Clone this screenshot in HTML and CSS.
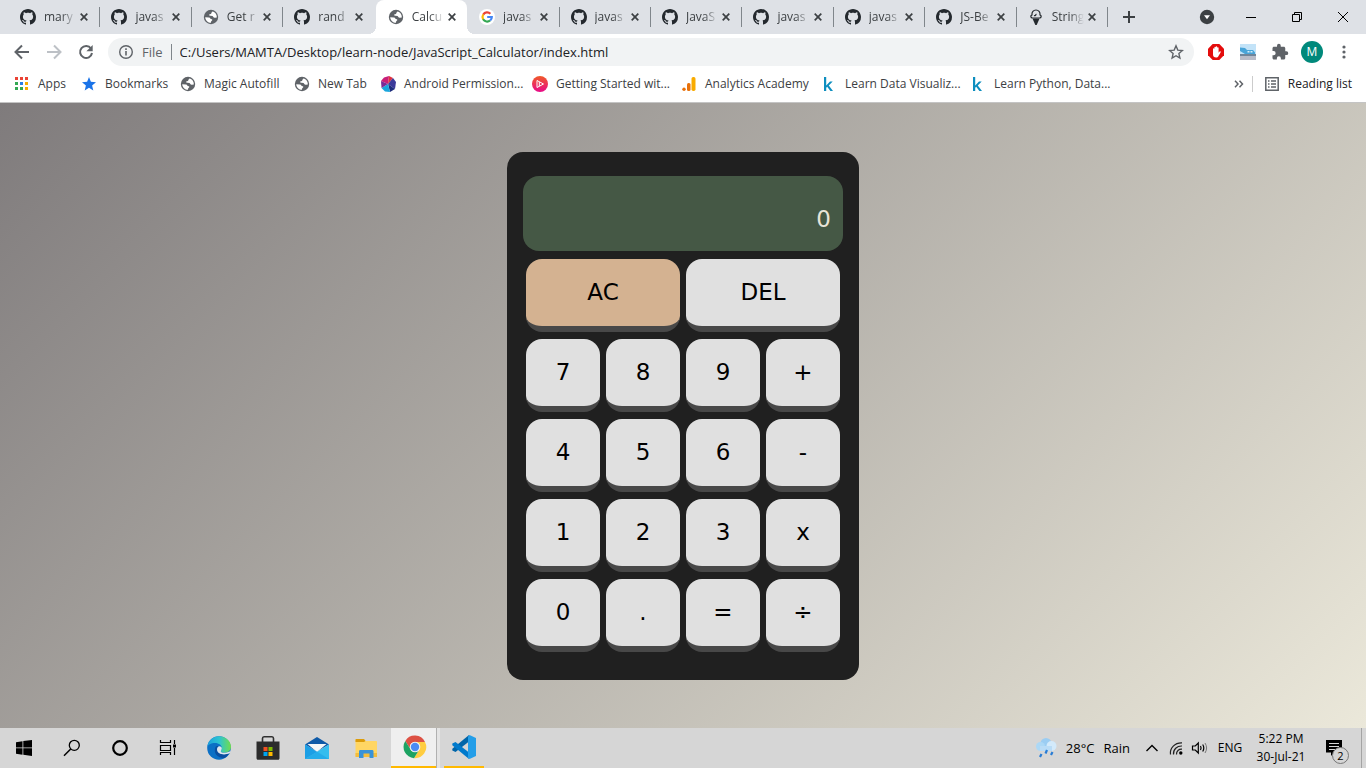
FILE: index.html
```
<!DOCTYPE html>
<html lang="en">
<head>
<meta charset="utf-8">
<title>Calculator</title>
<link rel="stylesheet" href="styles.css">
</head>
<body>
<svg class="defs" aria-hidden="true">
  <symbol id="github" viewBox="0 0 16 16"><path d="M8 0C3.58 0 0 3.58 0 8c0 3.54 2.29 6.53 5.47 7.59.4.07.55-.17.55-.38 0-.19-.01-.82-.01-1.49-2.01.37-2.53-.49-2.69-.94-.09-.23-.48-.94-.82-1.13-.28-.15-.68-.52-.01-.53.63-.01 1.08.58 1.23.82.72 1.21 1.87.87 2.33.66.07-.52.28-.87.51-1.07-1.78-.2-3.64-.89-3.64-3.95 0-.87.31-1.59.82-2.15-.08-.2-.36-1.02.08-2.12 0 0 .67-.21 2.2.82.64-.18 1.32-.27 2-.27s1.36.09 2 .27c1.53-1.04 2.2-.82 2.2-.82.44 1.1.16 1.92.08 2.12.51.56.82 1.27.82 2.15 0 3.07-1.87 3.75-3.65 3.95.29.25.54.73.54 1.48 0 1.07-.01 1.93-.01 2.2 0 .21.15.46.55.38A8.01 8.01 0 0 0 16 8c0-4.42-3.58-8-8-8z"/></symbol>
  <symbol id="globe" viewBox="0 0 16 16"><circle cx="8" cy="8" r="7.200"/><path d="M9.500 2.500C8 3.500 8.800 5 7 5.300 5.500 5.600 6 7 7.500 6.800L9.500 7c1 .3.5 2 2.500 1.800l1.800-.3C14 5.500 12 3 9.500 2.500zM2.200 8.200L6 8.500c1.500.3 1 1.500 2.800 1.700.7.300.7 1.300-.3 1.800-.7.500-.5 1.300-.5 1.800-3 0-5.500-2.300-5.800-5.600z" fill="#fff"/></symbol>
  <symbol id="x" viewBox="0 0 8 8"><path d="M.7.7l6.600 6.600M7.300.7L.7 7.300" fill="none" stroke="#3c4043" stroke-width="1.700"/></symbol>
  <symbol id="kaggle" viewBox="0 0 16 16"><path d="M3 1h2.200v8.500L9 5.500h2.700L7.800 9.400 12 15H9.400l-3.200-4.200-1 1V15H3z" fill="#0d8ebf"/></symbol>
</svg>

<header class="browser">
  <div class="tabstrip">
    <nav class="tabs" aria-label="Open tabs">
      <div class="tab"><svg class="fav"><use href="#github"/></svg><span class="title">mary</span><button class="close" aria-label="Close tab"><svg><use href="#x"/></svg></button></div>
      <div class="tab"><svg class="fav"><use href="#github"/></svg><span class="title">javas</span><button class="close" aria-label="Close tab"><svg><use href="#x"/></svg></button></div>
      <div class="tab"><svg class="fav globe"><use href="#globe"/></svg><span class="title">Get r</span><button class="close" aria-label="Close tab"><svg><use href="#x"/></svg></button></div>
      <div class="tab before"><svg class="fav"><use href="#github"/></svg><span class="title">rand</span><button class="close" aria-label="Close tab"><svg><use href="#x"/></svg></button></div>
      <div class="tab active"><svg class="fav globe"><use href="#globe"/></svg><span class="title">Calcu</span><button class="close" aria-label="Close tab"><svg><use href="#x"/></svg></button></div>
      <div class="tab"><svg class="fav" viewBox="0 0 16 16"><circle cx="8" cy="8" r="8" fill="#fff"/><g fill="none" stroke-width="2.200"><path d="M4.200 5.600a4.700 4.700 0 0 1 7.200-.9" stroke="#ea4335"/><path d="M4.200 5.500a5 5 0 0 0 0 5" stroke="#fbbc05"/><path d="M4.100 10.300a4.700 4.700 0 0 0 7 1.200" stroke="#34a853"/><path d="M8.200 8h4.600a4.700 4.700 0 0 1-1.600 3.500" stroke="#4285f4"/></g></svg><span class="title">javas</span><button class="close" aria-label="Close tab"><svg><use href="#x"/></svg></button></div>
      <div class="tab"><svg class="fav"><use href="#github"/></svg><span class="title">javas</span><button class="close" aria-label="Close tab"><svg><use href="#x"/></svg></button></div>
      <div class="tab"><svg class="fav"><use href="#github"/></svg><span class="title">JavaS</span><button class="close" aria-label="Close tab"><svg><use href="#x"/></svg></button></div>
      <div class="tab"><svg class="fav"><use href="#github"/></svg><span class="title">javas</span><button class="close" aria-label="Close tab"><svg><use href="#x"/></svg></button></div>
      <div class="tab"><svg class="fav"><use href="#github"/></svg><span class="title">javas</span><button class="close" aria-label="Close tab"><svg><use href="#x"/></svg></button></div>
      <div class="tab"><svg class="fav"><use href="#github"/></svg><span class="title">JS-Be</span><button class="close" aria-label="Close tab"><svg><use href="#x"/></svg></button></div>
      <div class="tab"><svg class="fav" viewBox="0 0 16 16"><path d="M4.500 9C2.500 9 2.200 6.500 4 5.900 3.600 3 5.500 1 8 1s4.400 2 4 4.900c1.800.6 1.500 3.100-.5 3.100zM6 6.500c1.200.5 2.200-.5 2-1.700" fill="none" stroke="#24292e" stroke-width="1.200"/><path d="M4.500 9.500h7L8.700 16H7.300z" fill="#24292e"/></svg><span class="title">String</span><button class="close" aria-label="Close tab"><svg><use href="#x"/></svg></button></div>
    </nav>
    <div class="window-controls">
      <button aria-label="New tab"><svg width="14" height="14" viewBox="0 0 14 14"><path d="M7 1v12M1 7h12" stroke="#3c4043" stroke-width="2"/></svg></button>
      <button class="search-tabs" aria-label="Search tabs"><svg width="16" height="16" viewBox="0 0 16 16"><circle cx="8" cy="8" r="7.200" fill="#3c4043"/><path d="M5 6.300h6L8 10.300z" fill="#fff"/></svg></button>
      <button aria-label="Minimize"><svg width="12" height="12" viewBox="0 0 12 12"><path d="M1 6.500h10" stroke="#000"/></svg></button>
      <button aria-label="Restore"><svg width="12" height="12" viewBox="0 0 12 12"><path d="M1.500 3.500h7v7h-7zM3.500 3.500v-2h7v7h-2" fill="none" stroke="#000"/></svg></button>
      <button aria-label="Close window"><svg width="12" height="12" viewBox="0 0 12 12"><path d="M1 1l10 10M11 1L1 11" stroke="#000"/></svg></button>
    </div>
  </div>

  <div class="toolbar">
    <button aria-label="Back"><svg width="16" height="16" viewBox="0 0 16 16"><path d="M15 8H2M8 1.500L1.500 8 8 14.500" fill="none" stroke="#5f6368" stroke-width="2"/></svg></button>
    <button aria-label="Forward"><svg width="16" height="16" viewBox="0 0 16 16"><path d="M1 8h13M8 1.500L14.500 8 8 14.500" fill="none" stroke="#bdc1c6" stroke-width="2"/></svg></button>
    <button aria-label="Reload"><svg width="16" height="16" viewBox="0 0 16 16"><path d="M13 4.500A6 6 0 1 0 14 9" fill="none" stroke="#5f6368" stroke-width="2"/><path d="M14.700 1v6.300H8.400z" fill="#5f6368"/></svg></button>
    <form class="omnibox">
      <svg width="16" height="16" viewBox="0 0 16 16"><circle cx="8" cy="8" r="6.300" fill="none" stroke="#5f6368" stroke-width="1.400"/><path d="M8 7v4.500M8 4.300v1.600" stroke="#5f6368" stroke-width="1.600"/></svg>
      <label for="address">File</label>
      <input id="address" type="text" value="C:/Users/MAMTA/Desktop/learn-node/JavaScript_Calculator/index.html">
      <button type="button" aria-label="Bookmark this page"><svg width="16" height="16" viewBox="0 0 16 16"><path d="M8 1.800l1.800 4.300 4.600.4-3.500 3.100 1 4.500L8 11.700l-3.900 2.400 1-4.500-3.500-3.100 4.600-.4z" fill="none" stroke="#5f6368" stroke-width="1.400"/></svg></button>
    </form>
    <button aria-label="Ad blocker"><svg width="16" height="16" viewBox="0 0 16 16"><path d="M4.700 0h6.600L16 4.700v6.600L11.300 16H4.700L0 11.300V4.700z" fill="#e40d0d"/><path d="M5 8.500V5a.7.700 0 0 1 1.400 0V3.500a.7.700 0 0 1 1.400 0V3a.7.700 0 0 1 1.400 0v1a.7.700 0 0 1 1.400 0v4.800l1-1.200c.7-.6 1.400 0 1 .8L10.500 12c-.5 1-1.300 1.500-2.400 1.500C6 13.500 5 12.300 5 10.500z" fill="#fff"/></svg></button>
    <button aria-label="Extension"><svg width="16" height="16" viewBox="0 0 16 16"><path d="M0 0h16v16H0z" fill="#c3e3f8"/><path d="M0 3.500l5 .5 2 2h6l2 2.500V10H5L0 7z" fill="#48a4d8"/><path d="M0 10h16v2H0z" fill="#70859a"/><path d="M7.500 7h2v1.500h-2zM10.500 7h2v1.500h-2z" fill="#d9edf8"/><path d="M0 12h16v4H0z" fill="#b9bcc8"/></svg></button>
    <button aria-label="Extensions"><svg width="18" height="18" viewBox="0 0 24 24"><path d="M20.500 11H19V7c0-1.100-.9-2-2-2h-4V3.500a2.500 2.500 0 0 0-5 0V5H4c-1.100 0-2 .9-2 2v3.800h1.500a2.700 2.700 0 0 1 0 5.400H2V20c0 1.100.9 2 2 2h3.800v-1.500a2.700 2.700 0 0 1 5.400 0V22H17c1.100 0 2-.9 2-2v-4h1.500a2.500 2.500 0 0 0 0-5z" fill="#5f6368"/></svg></button>
    <button aria-label="Profile"><span class="avatar">M</span></button>
    <button aria-label="Menu"><svg width="16" height="16" viewBox="0 0 16 16" fill="#5f6368"><circle cx="8" cy="3" r="1.600"/><circle cx="8" cy="8" r="1.600"/><circle cx="8" cy="13" r="1.600"/></svg></button>
  </div>

  <nav class="bookmarks" aria-label="Bookmarks">
    <div class="links">
      <a href="#"><svg viewBox="0 0 16 16"><path d="M1 1h3v3H1zM6 1h3v3H6zM11 1h3v3h-3z" fill="#ea4335"/><path d="M1 6h3v3H1z" fill="#34a853"/><path d="M6 6h3v3H6z" fill="#2a7de9"/><path d="M11 6h3v3h-3z" fill="#f9ab00"/><path d="M1 11h3v3H1zM6 11h3v3H6z" fill="#34a853"/><path d="M11 11h3v3h-3z" fill="#f9ab00"/></svg>Apps</a>
      <a href="#"><svg viewBox="0 0 16 16"><path d="M8 1l1.900 4.800 5.100.4-3.900 3.300 1.200 5L8 11.700l-4.300 2.800 1.200-5L1 6.200l5.100-.4z" fill="#1a73e8"/></svg>Bookmarks</a>
      <a href="#"><svg class="globe"><use href="#globe"/></svg>Magic Autofill</a>
      <a href="#"><svg class="globe"><use href="#globe"/></svg>New Tab</a>
      <a href="#"><svg viewBox="0 0 16 16"><path d="M8 8L1 5l3-3.500L9 0z" fill="#c81e78"/><path d="M8 8L9 0l4 2z" fill="#e0303f"/><path d="M8 8l5-6 3 4-1 7z" fill="#3b3a9b"/><path d="M8 8l7 5-5 3z" fill="#1c2c7c"/><path d="M8 8l2 8-5-.5L1.500 12z" fill="#18a6dd"/><path d="M8 8l-6.500 4L1 5z" fill="#7a2995"/></svg>Android Permission...</a>
      <a href="#"><svg viewBox="0 0 16 16"><defs><linearGradient id="ps" x2="0" y2="1"><stop stop-color="#f05a28"/><stop offset="1" stop-color="#e80a89"/></linearGradient></defs><circle cx="8" cy="8" r="8" fill="url(#ps)"/><path d="M5 4.500L11.500 8 5 11.500zM7.300 6v4" fill="none" stroke="#fff"/></svg>Getting Started wit...</a>
      <a href="#"><svg viewBox="0 0 16 16"><circle cx="3" cy="13.300" r="1.700" fill="#e8710a"/><rect x="6" y="7" width="3.500" height="8" rx="1.500" fill="#e8710a"/><rect x="10.500" y="1" width="4" height="14" rx="1.700" fill="#f9ab00"/></svg>Analytics Academy</a>
      <a href="#"><svg><use href="#kaggle"/></svg>Learn Data Visualiz...</a>
      <a href="#"><svg><use href="#kaggle"/></svg>Learn Python, Data...</a>
    </div>
    <button class="more" aria-label="More bookmarks"><svg width="10" height="8" viewBox="0 0 10 8"><path d="M1 .8L4 4 1 7.200M5.500.8l3 3.200-3 3.200" fill="none" stroke="#5f6368" stroke-width="1.500"/></svg></button>
    <button class="reading"><svg viewBox="0 0 16 16"><path d="M1.800 1.800h12.400v12.400H1.800z" fill="none" stroke="#5f6368" stroke-width="1.500"/><path d="M4 5h1.500M7 5h5M4 8h1.500M7 8h5M4 11h1.500M7 11h5" stroke="#5f6368" stroke-width="1.400"/></svg>Reading list</button>
  </nav>
</header>

<main class="page">
  <section class="calculator" aria-label="Calculator">
    <output class="display">0</output>
    <button class="wide clear">AC</button><button class="wide">DEL</button>
    <button>7</button><button>8</button><button>9</button><button>+</button>
    <button>4</button><button>5</button><button>6</button><button>-</button>
    <button>1</button><button>2</button><button>3</button><button>x</button>
    <button>0</button><button>.</button><button>=</button><button>÷</button>
  </section>
</main>

<footer class="taskbar">
  <div class="apps">
    <button aria-label="Start"><svg width="16" height="16" viewBox="0 0 16 16"><path d="M0 2.200l6.500-1v6.300H0zM7.300 1L16 0v7.500H7.300zM0 8.300h6.500v6.400L0 13.800zM7.300 8.300H16V16l-8.700-1.200z"/></svg></button>
    <button aria-label="Search"><svg width="18" height="18" viewBox="0 0 18 18"><circle cx="11.300" cy="6.300" r="5" fill="none" stroke="#000" stroke-width="1.300"/><path d="M7.700 10L1 16.700" stroke="#000" stroke-width="1.500"/></svg></button>
    <button aria-label="Cortana"><svg width="18" height="18" viewBox="0 0 18 18"><circle cx="9" cy="9" r="6.800" fill="none" stroke="#000" stroke-width="2.200"/></svg></button>
    <button aria-label="Task view"><svg width="18" height="18" viewBox="0 0 18 18"><path d="M1.500 1v2.500h10V1M1.500 6.500h10v5h-10zM1.500 16v-2.500h10V16M15.500 1v4M15.500 9v7" fill="none" stroke="#000" stroke-width="1.200"/><path d="M14 5.500h3v3h-3z"/></svg></button>
    <button class="app" aria-label="Edge"><svg width="24" height="24" viewBox="0 0 24 24"><defs><linearGradient id="e1"><stop stop-color="#1c9fdc"/><stop offset=".5" stop-color="#2dc4d1"/><stop offset="1" stop-color="#70dd4b"/></linearGradient></defs><circle cx="12" cy="12" r="11.800" fill="#0c70c5"/><path d="M.3 11C1 4.500 6 .2 12 .2S24 5 24 10.500c0 4-3 6.200-6.500 6.200-3 0-4-1-3.700-1.700.3-.7 1-1.200 1-3C14.800 9.500 12 7 8 7S.8 9 .3 11z" fill="url(#e1)"/><path d="M8.500 11c-2.500 6 2 11.500 9 11 2-1 4-3 4.800-5.200-6 3-12.300 1-12.300-3.800 0-1 .5-2 1.500-2.700-1-.5-2.400-.3-3 .7z" fill="#0b4fa0"/><path d="M10 13.500c0-2 1-3.300 2.500-3.300 1.400 0 2.300 1 2.300 2.200 0 1.300-1 1.900-1 2.800 0 1.200 2 1.700 4.200 1.600 2.200-.1 4.500-1 5.700-2.300l-.9 2.500C17 20 10 18 10 13.500z" fill="#e0e7ed"/></svg></button>
    <button class="app" aria-label="Microsoft Store"><svg width="24" height="24" viewBox="0 0 24 24"><path d="M6.500 6V2.500C6.500 1 7 .8 8 .8h8c1 0 1.500.2 1.500 1.700V6" fill="none" stroke="#303030" stroke-width="1.600"/><path d="M.5 5.500h23V22c0 1-.5 1.800-1.500 1.800H2C1 23.800.5 23 .5 22z" fill="#2c2c2c"/><path d="M7.500 11h4v4h-4z" fill="#f25022"/><path d="M12.500 11h4v4h-4z" fill="#7fba00"/><path d="M7.500 16h4v4h-4z" fill="#00a4ef"/><path d="M12.500 16h4v4h-4z" fill="#ffb900"/></svg></button>
    <button class="app" aria-label="Mail"><svg width="24" height="24" viewBox="0 0 24 24"><path d="M0 8.500L12 1l12 7.500-12 7z" fill="#0f5aa8"/><path d="M2.500 8h19L12 16z" fill="#f5f7f8"/><path d="M0 8.500L12 16l-12 7z" fill="#1792dd"/><path d="M24 8.500L0 23h24z" fill="#35bdee"/><path d="M0 8.500L24 23H0z" fill="#20a5e8" opacity=".7"/></svg></button>
    <button class="app" aria-label="File Explorer"><svg width="24" height="24" viewBox="0 0 24 24"><path d="M1.500 4c0-.6.400-1 1-1H10l1.500 2H22c.6 0 1 .4 1 1v14.500H1.500z" fill="#ffd664"/><path d="M1.500 6V4c0-.6.400-1 1-1H10l1.500 2L10 6z" fill="#dc9c0b"/><path d="M1.500 17h21.500v4H1.500z" fill="#f4bd3c"/><path d="M5 22v-6.500c0-1 .5-1.500 1.500-1.500h11.500c1 0 1.500.5 1.500 1.500V22h-4v-4.500h-6V22z" fill="#3893d9"/></svg></button>
    <button class="app current" aria-label="Chrome"><svg width="24" height="24" viewBox="0 0 24 24"><path d="M2.300 6A11.200 11.200 0 0 1 22 7H12a5 5 0 0 0-4.300 7.500z" fill="#dd5144"/><path d="M22 7A11.200 11.200 0 0 1 11 23.200l5.300-8.700A5 5 0 0 0 12 7z" fill="#ffcd40"/><path d="M2.300 6A11.200 11.200 0 0 0 11 23.200l5.300-8.700a5 5 0 0 1-8.600 0z" fill="#1da362"/><circle cx="12" cy="12" r="5.300" fill="#f1f1f1"/><circle cx="12" cy="12" r="4.200" fill="#4c8bf5"/></svg></button>
    <button class="app running" aria-label="Visual Studio Code"><svg width="24" height="24" viewBox="0 0 24 24"><path d="M17 0v6.500L3.500 17 .3 15.500v-1.700z" fill="#0065a9"/><path d="M17 24v-6.500L3.500 7 .3 8.500v1.700z" fill="#007acc"/><path d="M17.500 0L24 3v18l-6.500 3-1.500-1.500v-21z" fill="#249ee8"/></svg></button>
  </div>
  <div class="tray">
    <button class="weather"><svg width="22" height="22" viewBox="0 0 22 22"><circle cx="11" cy="6.500" r="5.500" fill="#9bcdf3"/><circle cx="5.500" cy="9.500" r="4.500" fill="#acd8f6"/><circle cx="16.500" cy="9" r="5" fill="#d3eafb"/><path d="M5 9h12v5H5z" fill="#b9dcf7"/><path d="M6.500 17L5 20M12 13l-1.500 3.500M17.500 15L16 18" stroke="#287cd5" stroke-width="2.200"/></svg><span>28°C</span><span>Rain</span></button>
    <button aria-label="Show hidden icons"><svg width="14" height="8" viewBox="0 0 14 8"><path d="M1.500 7L7 1.500 12.500 7" fill="none" stroke="#000" stroke-width="1.400"/></svg></button>
    <button aria-label="Network"><svg width="14" height="14" viewBox="0 0 14 14"><g fill="none" stroke="#222" stroke-width="1.200"><path d="M1.500 13.500C.5 7 6 1.500 13 1.800M4.500 13.500C4 8.500 8 4.800 13 5M7.500 13.500C7.300 10 9.800 8 13 8.200"/></g><circle cx="11.800" cy="12" r="1.700"/></svg></button>
    <button aria-label="Volume"><svg width="18" height="14" viewBox="0 0 18 14"><path d="M1.500 5h2.800l3-3v10l-3-3H1.500zM9.500 5q1.200 2 0 4M11.700 3.500q2.200 3.500 0 7" fill="none" stroke="#000" stroke-width="1.200"/><path d="M14 2q3.200 5 0 10" fill="none" stroke="#777"/></svg></button>
    <button class="lang">ENG</button>
    <button class="clock"><time>5:22 PM</time><time>30-Jul-21</time></button>
    <button class="notices" aria-label="2 notifications"><svg width="16" height="16" viewBox="0 0 16 16"><path d="M0 0h16v12.500H8L5 16v-3.500H0z"/><path d="M3 3.500h10M3 6.500h10M3 9.500h6" stroke="#d7d7d7"/></svg><span class="badge">2</span></button>
  </div>
</footer>
</body>
</html>
```
FILE: styles.css
```
* {
  box-sizing: border-box;
}

body {
  display: flex;
  flex-direction: column;
  min-height: 100vh;
  margin: 0;
  color: #3c4043;
  font: 12px/16px "Open Sans", "Noto Sans", sans-serif;
}

button,
input {
  margin: 0;
  padding: 0;
  border: 0;
  background: none;
  color: inherit;
  font: inherit;
}

svg {
  flex: none;
}

.defs {
  position: absolute;
  width: 0;
  height: 0;
}

.globe {
  fill: #5f6368;
}

/* Tab strip */
.tabstrip {
  display: flex;
  height: 34px;
  background: #dee1e6;
}

.tabs {
  display: flex;
  flex: 1;
  min-width: 0;
  padding-left: 8px;
}

.tab {
  position: relative;
  display: flex;
  flex: 1;
  align-items: center;
  min-width: 0;
  padding: 0 7px 0 12px;
}

.tab::after {
  position: absolute;
  top: 7px;
  right: -1px;
  width: 1px;
  height: 20px;
  background: #80868b;
  content: "";
}

.tab.before::after {
  display: none;
}

.fav {
  width: 16px;
  height: 16px;
  fill: #24292e;
}

.fav.globe {
  fill: #5f6368;
}

.title {
  flex: 1;
  min-width: 0;
  margin-left: 8px;
  white-space: nowrap;
  mask-image: linear-gradient(to right, #000 55%, transparent);
}

.close {
  display: grid;
  place-items: center;
  width: 16px;
  height: 16px;
}

.close svg {
  width: 8px;
  height: 8px;
}

.tab.active {
  margin-left: 2px;
  border-radius: 8px 8px 0 0;
  background: #fff;
}

.tab.active::before,
.tab.active::after {
  position: absolute;
  top: auto;
  bottom: 0;
  width: 8px;
  height: 8px;
  content: "";
}

.tab.active::before {
  left: -8px;
  background: radial-gradient(circle at 0 0, transparent 8px, #fff 8px);
}

.tab.active::after {
  right: -8px;
  background: radial-gradient(circle at 100% 0, transparent 8px, #fff 8px);
}

.window-controls {
  display: grid;
  flex: none;
  grid-template-columns: 44px 77px 46px 46px 46px;
  height: 28px;
}

.window-controls button {
  display: grid;
  place-items: center;
}

.window-controls button:nth-child(-n + 2) {
  height: 34px;
}

.window-controls .search-tabs {
  padding-left: 35px;
}

/* Toolbar */
.toolbar {
  display: flex;
  align-items: center;
  height: 36px;
  padding: 0 6px;
  background: #fff;
}

.toolbar > button {
  display: grid;
  place-items: center;
  width: 32px;
  height: 32px;
}

.omnibox {
  display: flex;
  flex: 1;
  align-items: center;
  height: 28px;
  margin: 0 6px;
  padding: 0 10px;
  border-radius: 14px;
  background: #f1f3f4;
  font-size: 13px;
}

.omnibox label {
  margin: 0 8px;
  padding-right: 8px;
  border-right: 1px solid #80868b;
  color: #5f6368;
}

.omnibox input {
  flex: 1;
  min-width: 0;
  color: #202124;
}

.omnibox button {
  display: grid;
}

.avatar {
  display: grid;
  place-items: center;
  width: 22px;
  height: 22px;
  border-radius: 50%;
  background: #00897b;
  color: #fff;
}

/* Bookmarks bar */
.bookmarks {
  display: flex;
  align-items: center;
  height: 33px;
  padding: 0 14px 4px;
  border-bottom: 1px solid #c4c4c4;
  background: #fff;
}

.links {
  display: grid;
  flex: 1;
  grid-template-columns: 67px 99px 114px 86px 152px 149px 140px 149px 1fr;
  white-space: nowrap;
}

.links a,
.reading {
  display: flex;
  gap: 8px;
  align-items: center;
  color: #3c4043;
  text-decoration: none;
}

.links svg,
.reading svg {
  width: 16px;
  height: 16px;
}

.more {
  display: grid;
  margin-right: 8px;
}

.reading {
  padding-left: 11px;
  border-left: 1px solid #ccc;
  color: #202124;
}

/* Calculator page */
.page {
  display: flex;
  flex: 1;
  align-items: flex-start;
  justify-content: center;
  padding: 49px 16px 48px;
  background: linear-gradient(135deg, #7f7b7c, #ebe8da);
}

.calculator {
  display: grid;
  grid-template-columns: repeat(4, 80px);
  grid-auto-rows: 80px;
  padding: 24px 16px;
  border-radius: 16px;
  background: #202020;
  font-family: "DejaVu Sans", sans-serif;
  font-size: 23px;
}

.display {
  display: flex;
  grid-column: 1 / -1;
  align-items: flex-end;
  justify-content: flex-end;
  margin-bottom: 5px;
  padding: 0 12px 16px;
  border-radius: 16px;
  background: #455845;
  color: #e8e4d8;
  line-height: 32px;
}

.calculator button {
  margin: 3px 3px 4px;
  padding-bottom: 2px;
  border-bottom: 6px solid #484848;
  border-radius: 16px;
  background: #e0e0e0;
  color: #000;
}

.calculator .wide {
  grid-column: span 2;
}

.calculator .clear {
  background: #d4b291;
}

/* Taskbar */
.taskbar {
  display: flex;
  justify-content: space-between;
  height: 40px;
  background: #d6d6d6;
  color: #000;
}

.apps,
.tray {
  display: flex;
}

.taskbar button {
  display: grid;
  place-items: center;
}

.apps button {
  width: 48px;
}

.apps .app {
  width: 49px;
  padding-left: 5px;
}

.apps .current {
  width: 45px;
  margin-left: 3px;
  padding-left: 2px;
  border-bottom: 2px solid #ffb900;
  background: #efefef;
  box-shadow: 1px 0 #b0b0b0, 4px 0 #e4e4e4;
}

.apps .running {
  width: 40px;
  margin-left: 8px;
  padding: 0;
  border-bottom: 2px solid #ffb900;
}

.tray {
  padding-right: 4px;
}

.tray button {
  width: 24px;
}

.tray .weather {
  display: flex;
  gap: 9px;
  align-items: center;
  width: auto;
  margin-right: 10px;
  font-size: 13px;
}

.tray .lang {
  width: 36px;
}

.tray .clock {
  align-content: center;
  width: 66px;
  line-height: 18px;
}

.tray .notices {
  position: relative;
  width: 48px;
  padding-right: 8px;
  border-right: 1px solid #a4a4a4;
}

.badge {
  position: absolute;
  right: 12px;
  bottom: 4px;
  width: 17px;
  height: 17px;
  border: 1px solid #777;
  border-radius: 50%;
  background: #d6d6d6;
  font-size: 11px;
  line-height: 15px;
}
```
